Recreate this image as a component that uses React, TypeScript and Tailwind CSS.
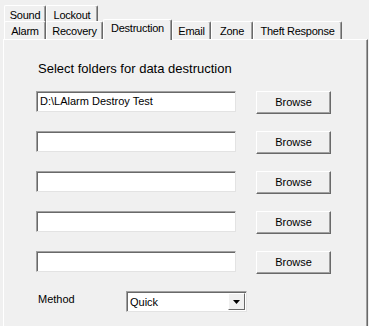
import React from "react";

const Tab = ({
  label,
  w,
  selected = false,
}: {
  label: string;
  w: string;
  selected?: boolean;
}) => (
  <div
    className={
      "flex items-center justify-center bg-[#f0f0f0] border-l border-t border-r border-l-white border-t-white border-r-[#696969] rounded-t-[2px] shadow-[inset_-1px_0_0_#a0a0a0] " +
      w +
      (selected ? " h-[21px] relative z-10 -mb-[1px] pb-[3px]" : " h-[18px] pt-[1px]")
    }
  >
    <span className="leading-none">{label}</span>
  </div>
);

const TextBox = ({ value = "" }: { value?: string }) => (
  <div className="w-[200px] h-[21px] bg-white border-t border-l border-t-[#a0a0a0] border-l-[#a0a0a0] border-b border-r border-b-[#e3e3e3] border-r-[#e3e3e3] shadow-[inset_1px_1px_0_#696969] flex items-center pl-[3px] text-[11px] text-black">
    {value}
  </div>
);

const Button = ({ label }: { label: string }) => (
  <div className="ml-[20px] w-[75px] h-[23px] bg-[#f0f0f0] border-t border-l border-t-white border-l-white border-b border-r border-b-[#696969] border-r-[#696969] shadow-[inset_-1px_-1px_0_#a0a0a0] flex items-center justify-center text-[11px] text-black">
    {label}
  </div>
);

export default function App() {
  return (
    <div
      className="w-[369px] h-[326px] bg-[#f0f0f0] overflow-hidden text-black"
      style={{ fontFamily: '"Liberation Sans", Arial, sans-serif' }}
    >
      <div className="pl-[4px] pt-[5px] text-[11px] tracking-[-0.25px]">
        <div className="flex">
          <Tab label="Sound" w="w-[42px]" />
          <Tab label="Lockout" w="w-[52px]" />
        </div>
        <div className="flex items-end h-[17px] -mt-[1px] relative">
          <div className="flex items-end">
            <Tab label="Alarm" w="w-[42px]" />
            <Tab label="Recovery" w="w-[57px]" />
            <Tab label="Destruction" w="w-[69px]" selected />
            <Tab label="Email" w="w-[39px]" />
            <Tab label="Zone" w="w-[42px]" />
            <Tab label="Theft Response" w="w-[89px]" />
          </div>
        </div>
      </div>
      <div className="ml-[3px] w-[365px] h-[300px] border-t border-l border-white border-r border-r-[#696969] shadow-[inset_-1px_0_0_#a0a0a0]">
        <div className="pl-[34px] pt-[21px] text-[13px] leading-[16px]">
          Select folders for data destruction
        </div>
        <div className="pl-[32px] pt-[14px] flex flex-col">
          <div className="flex items-start h-[40px]">
            <TextBox value="D:\LAlarm Destroy Test" />
            <Button label="Browse" />
          </div>
          <div className="flex items-start h-[40px]">
            <TextBox />
            <Button label="Browse" />
          </div>
          <div className="flex items-start h-[40px]">
            <TextBox />
            <Button label="Browse" />
          </div>
          <div className="flex items-start h-[40px]">
            <TextBox />
            <Button label="Browse" />
          </div>
          <div className="flex items-start h-[40px]">
            <TextBox />
            <Button label="Browse" />
          </div>
          <div className="flex items-start">
            <div className="w-[90px] pl-[2px] pt-[1px] text-[11px] leading-[14px]">Method</div>
            <div className="w-[121px] h-[21px] bg-white border-t border-l border-t-[#a0a0a0] border-l-[#a0a0a0] border-b border-r border-b-[#e3e3e3] border-r-[#e3e3e3] shadow-[inset_1px_1px_0_#696969] flex items-center text-[11px]">
              <span className="flex-1 pl-[3px] pt-[2px]">Quick</span>
              <div className="w-[17px] h-[17px] mr-[1px] bg-[#f0f0f0] border-t border-l border-t-white border-l-white border-b border-r border-b-[#696969] border-r-[#696969] flex items-center justify-center">
                <svg width="7" height="4" viewBox="0 0 7 4">
                  <polygon points="0,0 7,0 3.5,4" fill="#000" />
                </svg>
              </div>
            </div>
          </div>
        </div>
      </div>
    </div>
  );
}
